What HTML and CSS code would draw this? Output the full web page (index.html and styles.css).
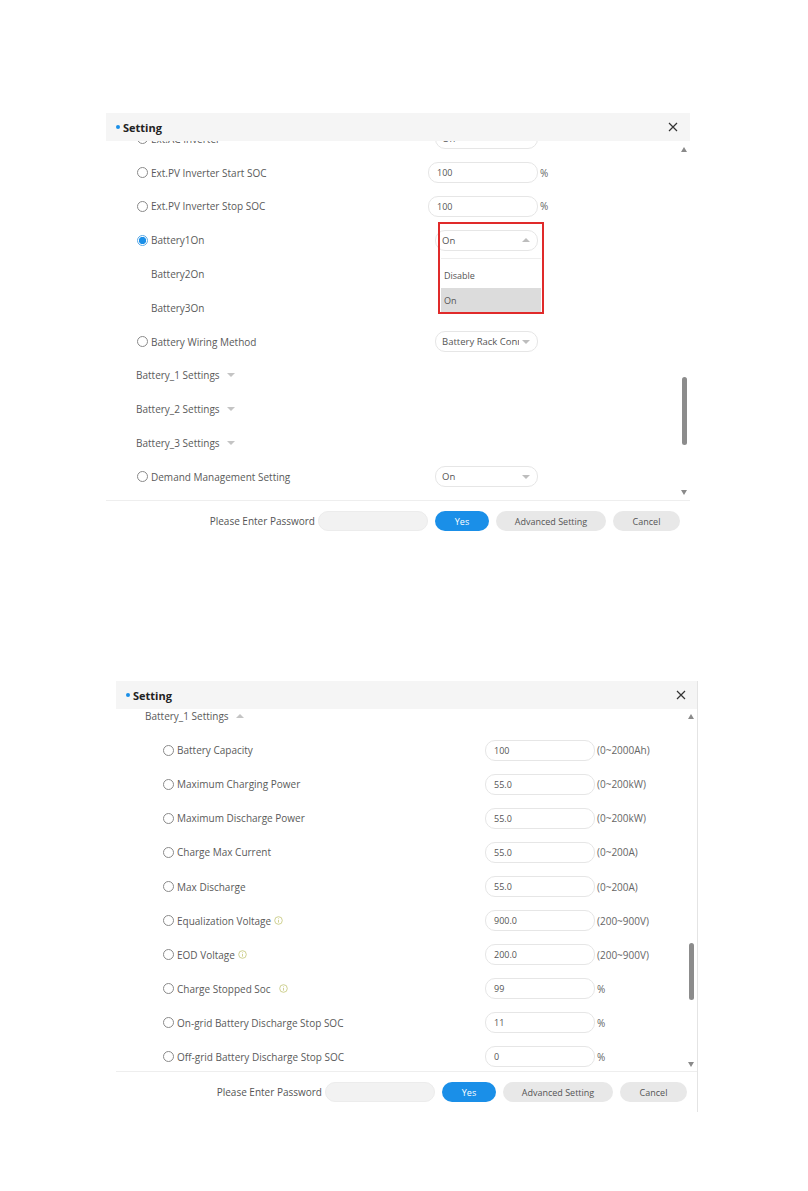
FILE: index.html
```html
<!DOCTYPE html>
<html>
<head>
<meta charset="utf-8">
<link rel="stylesheet" href="styles.css">
</head>
<body>
<div class="page">
  <section class="dialog d1">
    <div class="dlg-head">
      <span class="dot"></span><span class="title">Setting</span>
      <svg class="close" width="10" height="10" viewBox="0 0 10 10"><path d="M1 1L9 9M9 1L1 9" stroke="#333" stroke-width="1.2" fill="none"/></svg>
    </div>
    <div class="dlg-body">
      <div class="rows">
        <div class="row"><div class="lbl"><span class="radio"></span>Ext.AC Inverter</div><div class="select"><span>On</span><span class="tri down"></span></div></div>
        <div class="row"><div class="lbl"><span class="radio"></span>Ext.PV Inverter Start SOC</div><div class="input">100</div><span class="unit">%</span></div>
        <div class="row"><div class="lbl"><span class="radio"></span>Ext.PV Inverter Stop SOC</div><div class="input">100</div><span class="unit">%</span></div>
        <div class="row"><div class="lbl"><span class="radio checked"></span>Battery1On</div><div class="select"><span>On</span><span class="tri up"></span></div></div>
        <div class="row"><div class="lbl plain">Battery2On</div></div>
        <div class="row"><div class="lbl plain">Battery3On</div></div>
        <div class="row"><div class="lbl"><span class="radio"></span>Battery Wiring Method</div><div class="select"><span class="clip">Battery Rack Conn</span><span class="tri down"></span></div></div>
        <div class="row"><div class="group">Battery_1 Settings<span class="tri down light"></span></div></div>
        <div class="row"><div class="group">Battery_2 Settings<span class="tri down light"></span></div></div>
        <div class="row"><div class="group">Battery_3 Settings<span class="tri down light"></span></div></div>
        <div class="row"><div class="lbl"><span class="radio"></span>Demand Management Setting</div><div class="select"><span>On</span><span class="tri down"></span></div></div>
      </div>
      <div class="scroll">
        <span class="sarrow up"></span>
        <div class="track"><div class="thumb" style="margin-top:225px;height:68px"></div></div>
        <span class="sarrow down"></span>
      </div>
      <div class="dropdown">
        <div class="opt">Disable</div>
        <div class="opt active">On</div>
      </div>
      <div class="redbox"></div>
    </div>
    <div class="dlg-foot">
      <span class="pwd-label">Please Enter Password</span>
      <span class="pwd"></span>
      <span class="btn yes">Yes</span>
      <span class="btn adv">Advanced Setting</span>
      <span class="btn cancel">Cancel</span>
    </div>
  </section>

  <section class="dialog d2">
    <div class="dlg-head">
      <span class="dot"></span><span class="title">Setting</span>
      <svg class="close" width="10" height="10" viewBox="0 0 10 10"><path d="M1 1L9 9M9 1L1 9" stroke="#333" stroke-width="1.2" fill="none"/></svg>
    </div>
    <div class="dlg-body">
      <div class="rows">
        <div class="row"><div class="group">Battery_1 Settings<span class="tri up light"></span></div></div>
        <div class="row"><div class="lbl"><span class="radio"></span>Battery Capacity</div><div class="input">100</div><span class="unit">(0~2000Ah)</span></div>
        <div class="row"><div class="lbl"><span class="radio"></span>Maximum Charging Power</div><div class="input">55.0</div><span class="unit">(0~200kW)</span></div>
        <div class="row"><div class="lbl"><span class="radio"></span>Maximum Discharge Power</div><div class="input">55.0</div><span class="unit">(0~200kW)</span></div>
        <div class="row"><div class="lbl"><span class="radio"></span>Charge Max Current</div><div class="input">55.0</div><span class="unit">(0~200A)</span></div>
        <div class="row"><div class="lbl"><span class="radio"></span>Max Discharge</div><div class="input">55.0</div><span class="unit">(0~200A)</span></div>
        <div class="row"><div class="lbl"><span class="radio"></span>Equalization Voltage<svg class="info" width="9" height="9" viewBox="0 0 9 9"><circle cx="4.5" cy="4.5" r="3.8" fill="none" stroke="#c9cc86" stroke-width="0.9"/><path d="M4.5 3.8V6.6M4.5 2.3V2.9" stroke="#c9cc86" stroke-width="0.9"/></svg></div><div class="input">900.0</div><span class="unit">(200~900V)</span></div>
        <div class="row"><div class="lbl"><span class="radio"></span>EOD Voltage<svg class="info" width="9" height="9" viewBox="0 0 9 9"><circle cx="4.5" cy="4.5" r="3.8" fill="none" stroke="#c9cc86" stroke-width="0.9"/><path d="M4.5 3.8V6.6M4.5 2.3V2.9" stroke="#c9cc86" stroke-width="0.9"/></svg></div><div class="input">200.0</div><span class="unit">(200~900V)</span></div>
        <div class="row"><div class="lbl"><span class="radio"></span>Charge Stopped Soc<svg class="info wide" width="9" height="9" viewBox="0 0 9 9"><circle cx="4.5" cy="4.5" r="3.8" fill="none" stroke="#c9cc86" stroke-width="0.9"/><path d="M4.5 3.8V6.6M4.5 2.3V2.9" stroke="#c9cc86" stroke-width="0.9"/></svg></div><div class="input">99</div><span class="unit">%</span></div>
        <div class="row"><div class="lbl"><span class="radio"></span>On-grid Battery Discharge Stop SOC</div><div class="input">11</div><span class="unit">%</span></div>
        <div class="row"><div class="lbl"><span class="radio"></span>Off-grid Battery Discharge Stop SOC</div><div class="input">0</div><span class="unit">%</span></div>
      </div>
      <div class="scroll">
        <span class="sarrow up"></span>
        <div class="track"><div class="thumb" style="margin-top:224px;height:57px"></div></div>
        <span class="sarrow down"></span>
      </div>
    </div>
    <div class="dlg-foot">
      <span class="pwd-label">Please Enter Password</span>
      <span class="pwd"></span>
      <span class="btn yes">Yes</span>
      <span class="btn adv">Advanced Setting</span>
      <span class="btn cancel">Cancel</span>
    </div>
  </section>
</div>
</body>
</html>
```

FILE: styles.css
```css
html, body {
  margin: 0;
  padding: 0;
  background: #fff;
}
body {
  font-family: "Open Sans", "Noto Sans", sans-serif;
  font-size: 10px;
  color: #5a5a5a;
}
.page {
  padding-top: 113px;
}
.dialog {
  display: flex;
  flex-direction: column;
}
.d1 {
  width: 584px;
  margin-left: 106px;
}
.d2 {
  margin-left: 116px;
  margin-top: 140px;
  border-right: 1px solid #e4e4e4;
  box-sizing: border-box;
  width: 582px;
}
.dlg-head {
  height: 28px;
  background: #f5f5f5;
  display: flex;
  align-items: center;
  padding-left: 10px;
  padding-right: 12px;
  position: relative;
  z-index: 2;
}
.d2 .dlg-head { padding-left: 10px; padding-right: 11px; }
.dot {
  width: 4px;
  height: 4px;
  border-radius: 50%;
  background: #1a8fe8;
  margin-right: 3px;
}
.title {
  font-weight: 700;
  font-size: 11px;
  color: #222;
}
.close {
  margin-left: auto;
}
.dlg-body {
  display: flex;
  position: relative;
  overflow: hidden;
}
.d1 .dlg-body { height: 359px; }
.d2 .dlg-body { height: 362px; }
.rows {
  flex: 1;
  display: flex;
  flex-direction: column;
}
.d1 .rows { margin-top: -19px; }
.d2 .rows { margin-top: -10px; }
.row {
  display: flex;
  align-items: center;
  flex: none;
}
.d1 .row { height: 33.8px; }
.d2 .row { height: 34.1px; }
.lbl {
  display: flex;
  align-items: center;
  flex: none;
}
.d1 .lbl { width: 291px; padding-left: 31px; }
.d2 .lbl { width: 322px; padding-left: 47px; }
.lbl.plain { padding-left: 45px; }
.radio {
  border: 1px solid #8a8a8a;
  border-radius: 50%;
  margin-right: 3px;
  box-sizing: border-box;
  flex: none;
  width: 11px;
  height: 11px;
}
.radio.checked {
  border-color: #5aa9e6;
  background: radial-gradient(circle, #1a8fe8 0 3.4px, #fff 3.9px);
}
.info {
  margin-left: 3px;
}
.info.wide { margin-left: 8px; }
.group {
  display: flex;
  align-items: center;
}
.d1 .group { padding-left: 30px; }
.d2 .group { padding-left: 29px; }
.input, .select {
  height: 21px;
  box-sizing: border-box;
  border: 1px solid #e6e6e6;
  border-radius: 10px;
  display: flex;
  align-items: center;
  font-size: 9px;
  color: #555;
  flex: none;
}
.input {
  width: 110px;
  padding-left: 8px;
}
.select {
  width: 103px;
  margin-left: 7px;
  padding-left: 6px;
  padding-right: 7px;
  font-size: 9.5px;
}
.select .tri {
  margin-left: auto;
}
.clip {
  white-space: nowrap;
  overflow: hidden;
  width: 76.5px;
  flex: none;
}
.unit {
  margin-left: 2px;
  font-size: 10px;
  color: #666;
}
.tri {
  width: 0;
  height: 0;
  border-left: 4px solid transparent;
  border-right: 4px solid transparent;
}
.tri.down { border-top: 4px solid #bdbdbd; }
.tri.up { border-bottom: 4px solid #bdbdbd; }
.group .tri { margin-left: 7px; }
.tri.light.down { border-top-color: #c4c4c4; }
.tri.light.up { border-bottom-color: #c4c4c4; }
.scroll {
  width: 10px;
  display: flex;
  flex-direction: column;
  align-items: center;
  flex: none;
}
.d1 .scroll { margin-right: 1px; padding-top: 6px; padding-bottom: 5px; }
.d2 .scroll { margin-right: 1px; padding-top: 5px; padding-bottom: 4px; }
.track {
  flex: 1;
  display: flex;
  flex-direction: column;
  align-items: center;
}
.thumb {
  width: 5px;
  background: #8c8c8c;
  border-radius: 3px;
}
.sarrow {
  width: 0;
  height: 0;
  border-left: 3.5px solid transparent;
  border-right: 3.5px solid transparent;
}
.sarrow.up { border-bottom: 5px solid #8a8a8a; }
.sarrow.down { border-top: 5px solid #8a8a8a; }
.dropdown {
  position: absolute;
  left: 335px;
  top: 117px;
  width: 100px;
  padding-top: 4px;
  background: #fff;
  border-top: 1px solid #eee;
  z-index: 1;
}
.opt {
  height: 25px;
  display: flex;
  align-items: center;
  padding-left: 3px;
  font-size: 9px;
  color: #555;
}
.opt.active {
  background: #dcdcdc;
  height: 24px;
}
.redbox {
  position: absolute;
  left: 332px;
  top: 81px;
  width: 106px;
  height: 92px;
  box-sizing: border-box;
  border: 2px solid #e02a2a;
  z-index: 3;
}
.dlg-foot {
  height: 41px;
  border-top: 1px solid #eee;
  box-sizing: border-box;
  display: flex;
  align-items: center;
  justify-content: flex-end;
  padding-right: 10px;
}
.pwd-label {
  margin-right: 3px;
  color: #555;
  font-size: 10px;
}
.pwd {
  width: 110px;
  height: 20px;
  background: #f2f2f2;
  border: 1px solid #ececec;
  box-sizing: border-box;
  border-radius: 10px;
  margin-right: 7px;
}
.btn {
  height: 20px;
  border-radius: 10px;
  display: flex;
  align-items: center;
  justify-content: center;
  font-size: 9px;
  margin-right: 7px;
}
.btn.cancel { margin-right: 0; width: 67px; background: #e8e8e8; color: #555; }
.btn.yes { width: 54px; background: #1a8fe8; color: #fff; }
.btn.adv { width: 110px; background: #e8e8e8; color: #555; }
```
